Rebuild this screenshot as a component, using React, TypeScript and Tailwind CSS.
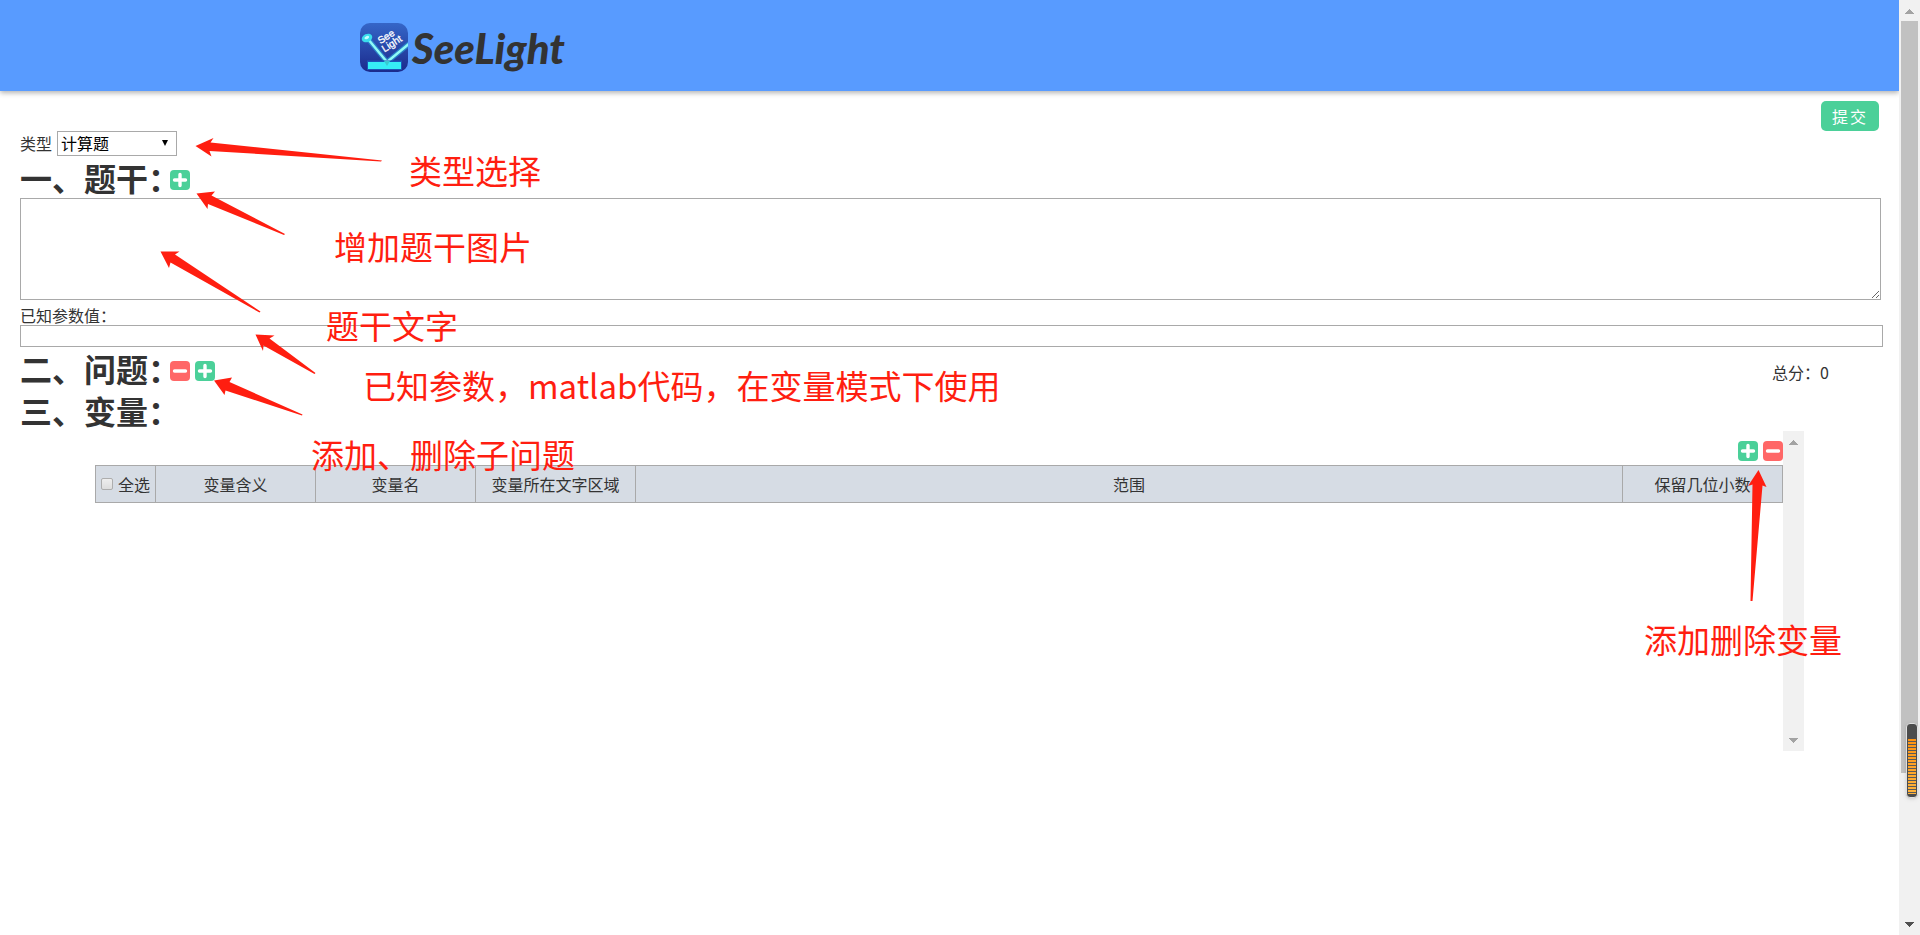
import { useState } from "react";
import type { ReactNode } from "react";

type Note = {
  text: string;
  className: string;
};

const notes: Note[] = [
  { text: "类型选择", className: "left-[409px] top-[154px]" },
  { text: "增加题干图片", className: "left-[334px] top-[230px]" },
  { text: "题干文字", className: "left-[326px] top-[309px]" },
  { text: "已知参数，matlab代码，在变量模式下使用", className: "left-[363px] top-[369px]" },
  { text: "添加、删除子问题", className: "left-[311px] top-[438px]" },
  { text: "添加删除变量", className: "right-[78px] top-[623px]" },
];

const arrows = [
  "195.5,146 213.5,138 210.5,142.5 382,160.5 381,161.5 209.5,151 211.5,156.5",
  "196.5,193.5 215,191.5 211.5,195.5 285,234 284,235 208,204 207.5,209",
  "160.5,251.5 179.5,251.5 175,254.5 260.5,311.5 259.5,312.5 170.5,262.5 169,268",
  "255.5,334.5 274.5,335.5 269.5,338.5 315.5,373 314.5,374 263.5,345.5 263,351",
  "214,380.5 232,377.5 229.5,382 302.5,414.5 302,415.5 225.5,390.5 224.5,395",
  "1758.5,470 1766.5,487 1762.5,485.5 1752.5,601 1750.5,601 1752.5,484.5 1748,486",
];

const columns = [
  { name: "变量含义", className: "w-[160px]" },
  { name: "变量名", className: "w-[160px]" },
  { name: "变量所在文字区域", className: "w-[160px]" },
  { name: "范围", className: "" },
  { name: "保留几位小数", className: "w-[160px]" },
];

function AddButton({ label }: { label: string }) {
  return (
    <button type="button" aria-label={label} className="block size-5 rounded bg-[#4bd099]">
      <svg viewBox="0 0 20 20" className="size-5">
        <path d="M10 4.500v11M4.500 10h11" stroke="#fff" strokeWidth="3.400" strokeLinecap="round" />
      </svg>
    </button>
  );
}

function RemoveButton({ label }: { label: string }) {
  return (
    <button type="button" aria-label={label} className="block size-5 rounded bg-[#ff6767]">
      <svg viewBox="0 0 20 20" className="size-5">
        <path d="M4.500 10h11" stroke="#fff" strokeWidth="3.400" strokeLinecap="round" />
      </svg>
    </button>
  );
}

function Logo() {
  return (
    <svg viewBox="0 0 48 49" className="h-[49px] w-12">
      <defs>
        <linearGradient id="logoBg" x1="0" y1="0" x2="0" y2="1">
          <stop offset="0" stopColor="#3566c8" />
          <stop offset="1" stopColor="#1b2a8c" />
        </linearGradient>
        <clipPath id="logoClip">
          <rect width="48" height="49" rx="10" />
        </clipPath>
      </defs>
      <g clipPath="url(#logoClip)">
        <rect width="48" height="49" fill="url(#logoBg)" />
        <path d="M8 16 27 39 50 20" fill="none" stroke="#2ba8e0" strokeWidth="5" opacity=".6" />
        <path d="M8 16 27 39 50 20" fill="none" stroke="#8ffaf6" strokeWidth="2.4" />
        <rect x="7" y="37.5" width="35" height="9.5" fill="#1c55b8" />
        <rect x="8" y="39" width="33" height="7" fill="#36eef6" />
        <path d="M24 38l3 5 3-5" fill="#39c9d0" />
        <ellipse cx="7" cy="15" rx="5.5" ry="4" fill="#39dcec" transform="rotate(-25 7 15)" />
        <ellipse cx="7" cy="14.5" rx="2.500" ry="1.500" fill="#c4fbff" transform="rotate(-25 7 15)" />
        <g transform="rotate(-33 28 20)" fill="#fff" stroke="#fff" strokeWidth=".3" className="font-['Liberation_Sans'] text-[10px]">
          <text x="21" y="17">See</text>
          <text x="20" y="26">Light</text>
        </g>
      </g>
    </svg>
  );
}

function Heading({ title, children }: { title: string; children?: ReactNode }) {
  return (
    <div className="flex h-[42px] items-center">
      <h1 className="w-[150px] whitespace-nowrap text-[32px] leading-[42px] font-bold">{title}</h1>
      <div className="flex gap-[5px] pt-[6px]">{children}</div>
    </div>
  );
}

function ScrollArrow({ down, className }: { down?: boolean; className: string }) {
  return (
    <svg viewBox="0 0 21 21" className={`size-[21px] shrink-0 ${className}`} shapeRendering="crispEdges">
      <path d={down ? "M6 8h9l-4.5 5z" : "M6 14h9l-4.5-5z"} fill="currentColor" />
    </svg>
  );
}

function Meter() {
  return (
    <svg viewBox="0 0 12 76" className="absolute top-[723px] right-[2px] h-[76px] w-3 drop-shadow">
      <defs>
        <linearGradient id="meterFill" x1="0" y1="0" x2="0" y2="1">
          <stop offset="0" stopColor="#ff9310" />
          <stop offset="1" stopColor="#ffb43c" />
        </linearGradient>
      </defs>
      <rect x=".5" y=".5" width="11" height="74" rx="3.5" fill="#4c4c4c" stroke="#e0e0e0" />
      <rect x="2" y="16" width="8" height="55" fill="url(#meterFill)" />
      <path d="M6 18v53" stroke="#5a5a5a" strokeWidth="8" strokeDasharray="1 2" shapeRendering="crispEdges" />
    </svg>
  );
}

export default function App() {
  const [type, setType] = useState("计算题");
  const [stem, setStem] = useState("");
  const [params, setParams] = useState("");
  const [allChecked, setAllChecked] = useState(false);

  return (
    <div className="relative flex min-h-screen overflow-hidden bg-white font-['Noto_Sans_CJK_SC',sans-serif] text-base text-[#333]">
      <div className="min-w-0 flex-1">
        {/* HEADER */}
        <header className="flex h-[91px] items-center bg-[#589bff] pl-[360px] pt-1 shadow-[0_2px_5px_rgba(0,0,0,0.3)]">
          <a href="#" className="flex items-center gap-1">
            <Logo />
            <span className="font-['Lato',sans-serif] text-[42px] leading-[48px] font-black italic">SeeLight</span>
          </a>
        </header>

        <main className="px-5 pt-[10px]">
          <div className="flex justify-end">
            <button
              type="button"
              className="h-[30px] w-[58px] rounded-[5px] bg-[#4bd099] text-base leading-[30px] tracking-[2px] text-white"
            >
              提交
            </button>
          </div>

          {/* TYPE */}
          <div className="flex h-[25px] items-center gap-[5px]">
            <label htmlFor="type" className="leading-[25px]">类型</label>
            <div className="relative">
              <select
                id="type"
                value={type}
                onChange={(e) => setType(e.target.value)}
                className="block h-[25px] w-[120px] appearance-none border border-[#a9a9a9] bg-white pl-[3px] leading-[23px] text-black"
              >
                <option>计算题</option>
                <option>选择题</option>
                <option>填空题</option>
              </select>
              <svg viewBox="0 0 6 6" className="pointer-events-none absolute top-[9px] right-[9px] size-[6px]">
                <path d="M0 0h6L3 6z" />
              </svg>
            </div>
          </div>

          {/* STEM */}
          <Heading title="一、题干：">
            <AddButton label="增加题干图片" />
          </Heading>
          <div className="-mr-[2px]">
            <textarea
              aria-label="题干"
              value={stem}
              onChange={(e) => setStem(e.target.value)}
              className="block h-[102px] w-full resize border border-[#a9a9a9] p-[2px]"
            />
          </div>
          <div className="-mr-1 pt-[5px]">
            <label htmlFor="params" className="block leading-[20px]">已知参数值：</label>
            <input
              id="params"
              value={params}
              onChange={(e) => setParams(e.target.value)}
              className="block h-[22px] w-full border border-[#a9a9a9] px-[2px]"
            />
          </div>

          {/* QUESTIONS */}
          <div className="flex items-center justify-between pr-[50px]">
            <Heading title="二、问题：">
              <RemoveButton label="删除子问题" />
              <AddButton label="添加子问题" />
            </Heading>
            <span className="pt-2">总分：0</span>
          </div>

          {/* VARIABLES */}
          <Heading title="三、变量：" />
          <div className="mx-[75px] flex h-[320px]">
            <div className="min-w-0 flex-1">
              <div className="flex justify-end gap-[5px] pt-[10px] pb-1">
                <AddButton label="添加变量" />
                <RemoveButton label="删除变量" />
              </div>
              <table className="w-full table-fixed border-collapse bg-[#d6dce4]">
                <thead>
                  <tr className="h-[37px]">
                    <th className="w-[60px] border border-[#a9a9a9] p-0 font-normal">
                      <label className="flex items-center justify-center gap-[5px] whitespace-nowrap">
                        <input
                          type="checkbox"
                          checked={allChecked}
                          onChange={(e) => setAllChecked(e.target.checked)}
                          className="size-3 appearance-none rounded-[2px] border border-[#adadad] bg-linear-to-b from-[#eeeeee] to-[#dddddd] checked:bg-[#589bff]"
                        />
                        全选
                      </label>
                    </th>
                    {columns.map((column) => (
                      <th
                        key={column.name}
                        className={`border border-[#a9a9a9] p-0 font-normal whitespace-nowrap ${column.className}`}
                      >
                        {column.name}
                      </th>
                    ))}
                  </tr>
                </thead>
              </table>
            </div>
            <div className="flex w-[21px] flex-col justify-between bg-[#f1f1f1]">
              <ScrollArrow className="text-[#a3a3a3]" />
              <ScrollArrow down className="text-[#a3a3a3]" />
            </div>
          </div>
        </main>
      </div>

      {/* PAGE SCROLLBAR */}
      <div className="flex w-[21px] shrink-0 flex-col bg-[#f1f1f1]">
        <ScrollArrow className="text-[#a3a3a3]" />
        <div className="flex-1 px-[2px]">
          <div className="h-[752px] bg-[#c1c1c1]" />
        </div>
        <ScrollArrow down className="text-[#505050]" />
      </div>
      <Meter />

      {/* NOTES */}
      <div className="pointer-events-none absolute inset-0 text-[33px] leading-[33px] text-[#ff1e10]">
        <svg className="absolute inset-0 size-full" fill="currentColor">
          {arrows.map((points) => (
            <polygon key={points} points={points} />
          ))}
        </svg>
        {notes.map((note) => (
          <p key={note.text} className={`absolute whitespace-nowrap ${note.className}`}>
            {note.text}
          </p>
        ))}
      </div>
    </div>
  );
}
